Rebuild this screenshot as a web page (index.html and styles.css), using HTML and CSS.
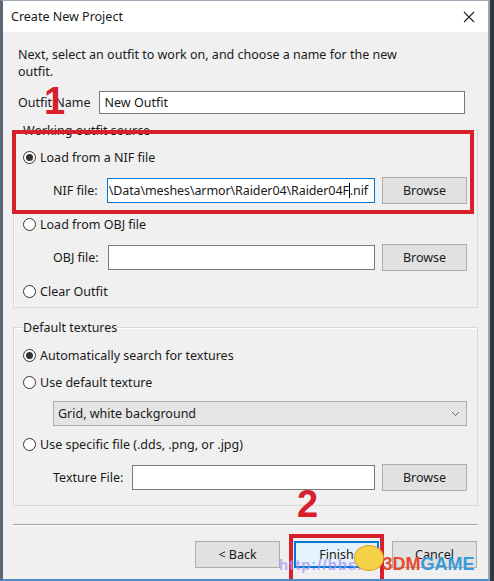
FILE: index.html
```html
<!DOCTYPE html>
<html lang="en">
<head>
    <meta charset="UTF-8">
    <meta name="viewport" content="width=device-width, initial-scale=1.0">
    <title>Create New Project</title>
    <link rel="stylesheet" href="styles.css">
</head>
<body>
    <div class="dialog">
        <div class="titlebar">
            <span class="title">Create New Project</span>
            <svg class="close" width="12" height="12" viewBox="0 0 12 12">
                <path d="M1 1L11 11M11 1L1 11" stroke="#222" stroke-width="1.1" fill="none"/>
            </svg>
        </div>
        <div class="content">
            <p class="intro">Next, select an outfit to work on, and choose a name for the new<br>outfit.</p>
            <div class="name-row">
                <label for="outfitName">Outfit Name</label>
                <div class="input">New Outfit</div>
            </div>

            <div class="group group-source">
                <span class="group-title">Working outfit source</span>
                <div class="radio-row r1"><span class="radio checked"></span>Load from a NIF file</div>
                <div class="file-row">
                    <span class="file-label">NIF file:</span>
                    <div class="input focused">\Data\meshes\armor\Raider04\Raider04F<span class="caret"></span>.nif</div>
                    <button>Browse</button>
                </div>
                <div class="radio-row"><span class="radio"></span>Load from OBJ file</div>
                <div class="file-row">
                    <span class="file-label">OBJ file:</span>
                    <div class="input"></div>
                    <button>Browse</button>
                </div>
                <div class="radio-row"><span class="radio"></span>Clear Outfit</div>
            </div>

            <div class="group group-textures">
                <span class="group-title">Default textures</span>
                <div class="radio-row t1"><span class="radio checked"></span>Automatically search for textures</div>
                <div class="radio-row t2"><span class="radio"></span>Use default texture</div>
                <div class="select">
                    <span>Grid, white background</span>
                    <svg width="9" height="6" viewBox="0 0 9 6"><path d="M1 1L4.5 4.5L8 1" stroke="#666" fill="none"/></svg>
                </div>
                <div class="radio-row t3"><span class="radio"></span>Use specific file (.dds, .png, or .jpg)</div>
                <div class="file-row t4">
                    <span class="file-label">Texture File:</span>
                    <div class="input"></div>
                    <button>Browse</button>
                </div>
            </div>

            <div class="separator"></div>

            <div class="buttons">
                <button>&lt; Back</button>
                <button class="default">Finish</button>
                <button>Cancel</button>
            </div>
        </div>

        <div class="mark mark-box-1"></div>
        <div class="mark mark-num-1">1</div>
        <div class="mark mark-box-2"></div>
        <div class="mark mark-num-2">2</div>
        <div class="watermark">
            <span class="wm-url">http://bbs.</span>
            <span class="wm-chick"></span>
            <span class="wm-3dm">3DM</span><span class="wm-game">GAME</span>
        </div>
    </div>
</body>
</html>
```

FILE: styles.css
```css
* {
    box-sizing: border-box;
}
html, body {
    margin: 0;
    height: 100%;
}
body {
    background: #2e3640;
    font-family: "Noto Sans", "Open Sans", sans-serif;
    font-size: 12.5px;
    color: #1a1a1a;
    overflow: hidden;
}
.dialog {
    position: relative;
    width: 490px;
    height: 581px;
    background: #f0f0f0;
    border-left: 3px solid #5d6873;
    border-right: 2px solid #9aa7b2;
    border-top: 1px solid #9aa7b2;
    border-bottom: 2px solid #4f8cc9;
    overflow: hidden;
}
.titlebar {
    height: 31px;
    background: #fff;
    display: flex;
    align-items: center;
    justify-content: space-between;
    padding: 0 12px 0 8px;
}
.close {
    margin-right: 1px;
}
.content {
    padding: 14px 10px 0 10px;
}
.intro {
    margin: 0 0 0 5px;
    line-height: 17px;
}
.name-row {
    display: flex;
    align-items: center;
    gap: 8px;
    margin: 11px 13px 0 5px;
    height: 23px;
}
.name-row .input {
    flex: 1;
    height: 23px;
}
.input {
    background: #fff;
    border: 1px solid #7a7a7a;
    height: 25px;
    padding: 0 5px;
    display: flex;
    align-items: center;
    white-space: nowrap;
    overflow: hidden;
}
.input.focused {
    border-color: #0078d7;
    padding: 0 2px 0 1px;
    letter-spacing: -0.1px;
}
.caret {
    display: inline-block;
    width: 1px;
    height: 15px;
    background: #000;
}
.group {
    border: 1px solid #d9d9d9;
    box-shadow: inset 1px 1px 0 #fff;
    padding: 0 10px 0 9px;
}
.group-source {
    margin-top: 16px;
    height: 178px;
}
.group-textures {
    margin-top: 19px;
    height: 179px;
}
.group-title {
    display: block;
    width: fit-content;
    height: 17px;
    margin-top: -9px;
    background: #f0f0f0;
    line-height: 17px;
}
.radio-row {
    display: flex;
    align-items: center;
    height: 20px;
    gap: 4px;
    margin-top: 10px;
}
.radio-row.r1 {
    margin-top: 8px;
}
.radio {
    width: 13px;
    height: 13px;
    border: 1px solid #333;
    border-radius: 50%;
    background: #fff;
    display: flex;
    align-items: center;
    justify-content: center;
}
.radio.checked::after {
    content: "";
    width: 7px;
    height: 7px;
    border-radius: 50%;
    background: #333;
}
.file-row {
    display: flex;
    align-items: center;
    gap: 9px;
    margin-top: 10px;
    padding-left: 30px;
    height: 27px;
}
.file-row .input {
    flex: 1;
    min-width: 0;
}
button {
    font: inherit;
    color: #1a1a1a;
    background: #e1e1e1;
    border: 1px solid #adadad;
    height: 27px;
    width: 85px;
    padding: 0;
    flex-shrink: 0;
}
.file-row button {
    margin-left: -2px;
}
.group-textures .t1 {
    margin-top: 9px;
}
.group-textures .t2 {
    margin-top: 7px;
}
.select {
    margin: 9px 0 0 30px;
    height: 25px;
    border: 1px solid #adadad;
    background: #e5e5e5;
    display: flex;
    align-items: center;
    justify-content: space-between;
    padding: 0 6px 0 4px;
}
.group-textures .t3 {
    margin-top: 8px;
}
.group-textures .t4 {
    margin-top: 10px;
}
.separator {
    margin-top: 18px;
    border-top: 1px solid #a0a0a0;
    border-bottom: 1px solid #fff;
}
.buttons {
    display: flex;
    justify-content: flex-end;
    gap: 13px;
    margin-top: 15px;
    padding-right: 1px;
}
.buttons button:first-child {
    margin-right: 1px;
}
button.default {
    border: 2px solid #0078d7;
    background: #e5f1fb;
}
.mark {
    position: absolute;
    color: #d7202c;
    font-family: "Liberation Sans", sans-serif;
    font-weight: bold;
}
.mark-box-1 {
    left: 9px;
    top: 129px;
    width: 462px;
    height: 84px;
    border: 4px solid #d7202c;
}
.mark-box-2 {
    left: 286px;
    top: 533px;
    width: 95px;
    height: 60px;
    border: 4px solid #d7202c;
}
.mark-num-1 {
    left: 41px;
    top: 80px;
    font-size: 38px;
    line-height: 40px;
}
.mark-num-2 {
    left: 294px;
    top: 483px;
    font-size: 38px;
    line-height: 40px;
}
.watermark {
    position: absolute;
    left: 276px;
    top: 553px;
    display: flex;
    align-items: center;
    font-family: "Liberation Sans", sans-serif;
    font-weight: bold;
    font-size: 18px;
    white-space: nowrap;
}
.wm-url {
    color: rgba(160, 150, 240, 0.75);
    font-size: 15px;
    letter-spacing: 1px;
}
.wm-chick {
    width: 30px;
    height: 26px;
    margin: -14px -4px 0 -8px;
    border-radius: 50%;
    background: #f5d24a;
    border: 1px solid #d9a520;
}
.wm-3dm {
    color: #e8482c;
    margin-left: 2px;
}
.wm-game {
    color: #3a9ad9;
}
```
